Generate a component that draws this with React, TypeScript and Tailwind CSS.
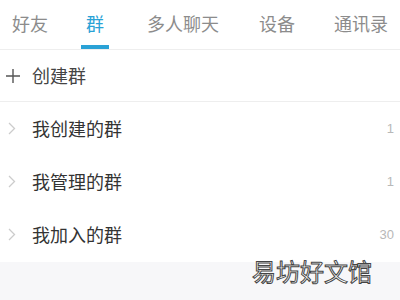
const tabs = [
  { label: "好友", ml: "ml-[12px]" },
  { label: "群", ml: "ml-[33px]" },
  { label: "多人聊天", ml: "ml-[38px]" },
  { label: "设备", ml: "ml-[40px]" },
  { label: "通讯录", ml: "ml-[39px]" },
];

const groups = [
  { name: "我创建的群", count: "1" },
  { name: "我管理的群", count: "1" },
  { name: "我加入的群", count: "30" },
];

const font = { fontFamily: '"Noto Sans CJK SC", "Liberation Sans", sans-serif' };

export default function App() {
  return (
    <div className="relative flex h-[300px] w-[400px] flex-col overflow-hidden bg-[#f7f7f9]" style={font}>
      <div className="bg-white">
        <div className="flex h-[50px] items-end border-b border-[#eeeeee]">
          {tabs.map((t, i) => (
            <div key={t.label} className={`flex flex-col items-center ${t.ml}`}>
              <span className={`text-[18px] leading-[24px] ${i === 1 ? "text-[#2aa2d6]" : "text-[#8c8c8c]"}`}>{t.label}</span>
              <div className={`mt-[10px] h-[4px] w-[28px] ${i === 1 ? "bg-[#2aa2d6]" : "bg-transparent"}`} />
            </div>
          ))}
        </div>

        <div className="flex h-[52px] items-center gap-[12px] border-b border-[#eeeeee] pl-[6px]">
          <svg width="14" height="14" viewBox="0 0 14 14" className="text-[#555]">
            <path d="M7 0v14M0 7h14" stroke="currentColor" strokeWidth="1.4" />
          </svg>
          <span className="text-[18px] text-[#444]">创建群</span>
        </div>

        <div className="flex flex-col pb-[1px]">
          {groups.map((g) => (
            <div key={g.name} className="flex h-[53px] items-center pl-[8px] pr-[6px]">
              <svg width="8" height="13" viewBox="0 0 8 13" className="text-[#cccccc]">
                <path d="M1 1l5.5 5.5L1 12" fill="none" stroke="currentColor" strokeWidth="1.3" />
              </svg>
              <span className="ml-[16px] flex-1 text-[18px] text-[#333]">{g.name}</span>
              <span className="text-[13px] text-[#b8b8b8]" style={{ fontFamily: '"Liberation Sans", sans-serif' }}>{g.count}</span>
            </div>
          ))}
        </div>
      </div>

      <div
        className="absolute left-[252px] top-[253px] text-[24px] text-white"
        style={{ WebkitTextStroke: "1px #444" }}
      >
        易坊好文馆
      </div>
    </div>
  );
}
